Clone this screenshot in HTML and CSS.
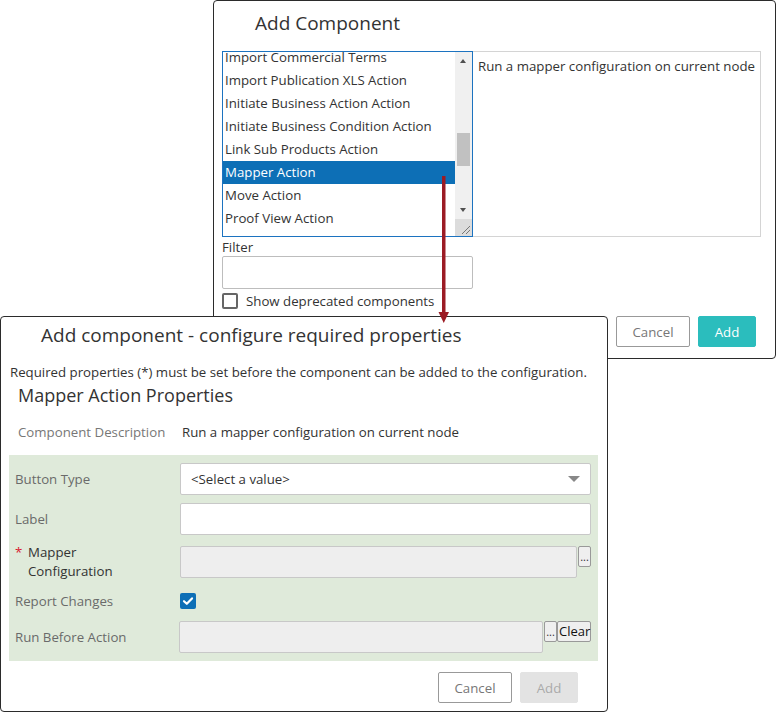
FILE: index.html
```html
<!DOCTYPE html>
<html>
<head>
<meta charset="utf-8">
<link rel="stylesheet" href="styles.css">
</head>
<body>
<div class="desk">
  <section class="dlg dlg-top">
    <h1 class="dlg-title">Add Component</h1>
    <div class="pick">
      <div class="listbox">
        <div class="items">
          <div class="item">Import Commercial Terms</div>
          <div class="item">Import Publication XLS Action</div>
          <div class="item">Initiate Business Action Action</div>
          <div class="item">Initiate Business Condition Action</div>
          <div class="item">Link Sub Products Action</div>
          <div class="item sel">Mapper Action</div>
          <div class="item">Move Action</div>
          <div class="item">Proof View Action</div>
        </div>
        <div class="vscroll">
          <div class="arr up"></div>
          <div class="track"><div class="thumb"></div></div>
          <div class="arr down"></div>
          <div class="grip">
            <svg width="17" height="17" viewBox="0 0 17 17"><path d="M7 15 L15 7 M11 15 L15 11" stroke="#777" stroke-width="1" fill="none"/></svg>
          </div>
        </div>
      </div>
      <div class="desc">Run a mapper configuration on current node</div>
    </div>
    <div class="flabel">Filter</div>
    <div class="finput"></div>
    <div class="chkrow"><span class="chk"></span><span>Show deprecated components</span></div>
    <div class="btns top-btns">
      <button class="btn cancel">Cancel</button>
      <button class="btn add">Add</button>
    </div>
  </section>

  <section class="dlg dlg-bottom">
    <h1 class="dlg-title t2">Add component - configure required properties</h1>
    <p class="note">Required properties (*) must be set before the component can be added to the configuration.</p>
    <h2 class="props">Mapper Action Properties</h2>
    <div class="descrow"><span class="dlbl">Component Description</span><span class="dval">Run a mapper configuration on current node</span></div>
    <div class="panel">
      <div class="row r1">
        <div class="lbl">Button Type</div>
        <div class="ctl"><div class="select"><span>&lt;Select a value&gt;</span><span class="caret"></span></div></div>
      </div>
      <div class="row r2">
        <div class="lbl">Label</div>
        <div class="ctl"><div class="inp"></div></div>
      </div>
      <div class="row r3">
        <div class="lbl req"><span class="star">*</span><span>Mapper<br>Configuration</span></div>
        <div class="ctl"><div class="inp dis"></div><button class="mini">...</button></div>
      </div>
      <div class="row r4">
        <div class="lbl">Report Changes</div>
        <div class="ctl"><span class="cbx"><svg width="16" height="16" viewBox="0 0 16 16"><path d="M4 8.2 L6.8 10.8 L12 5.4" stroke="#fff" stroke-width="2.2" fill="none" stroke-linecap="round" stroke-linejoin="round"/></svg></span></div>
      </div>
      <div class="row r5">
        <div class="lbl">Run Before Action</div>
        <div class="ctl"><div class="inp dis short"></div><button class="mini">...</button><button class="mini clear">Clear</button></div>
      </div>
    </div>
    <div class="btns bot-btns">
      <button class="btn cancel">Cancel</button>
      <button class="btn add off">Add</button>
    </div>
  </section>

  <svg class="arrow" width="14" height="150" viewBox="0 0 14 150">
    <rect x="5" y="0" width="3.5" height="138" fill="#9b1b24"/>
    <path d="M1.5 136 L12 136 L6.75 147 Z" fill="#9b1b24"/>
  </svg>
</div>
</body>
</html>
```
FILE: styles.css
```css
* { box-sizing: border-box; }
html, body { margin: 0; padding: 0; background: #fff; }
body {
  font-family: "Open Sans", "Noto Sans", sans-serif;
  font-size: 13.25px;
  color: #333;
}
.desk { position: relative; width: 777px; height: 712px; overflow: hidden; }

.dlg {
  position: absolute;
  background: #fff;
  border: 1px solid #2b2b2b;
  border-radius: 4px;
}
.dlg-top { left: 213px; top: 0; width: 563px; height: 359px; padding: 0 0 0 8px; }
.dlg-bottom { left: 0; top: 316px; width: 608px; height: 396px; }

.dlg-title {
  margin: 0;
  font-weight: 400;
  font-size: 19px;
  line-height: 26px;
  color: #333;
  padding: 9px 0 0 33px;
  height: 50px;
}
.pick { display: flex; height: 186px; }
.listbox {
  width: 251px;
  border: 1px solid #1c73c0;
  display: flex;
  overflow: hidden;
  position: relative;
}
.items { flex: 1; margin-top: -6px; }
.item { height: 23px; line-height: 23px; padding-left: 2px; white-space: nowrap; }
.item.sel { background: #0d6fb6; color: #fff; }
.vscroll { width: 17px; background: #f0f0f0; display: flex; flex-direction: column; }
.arr { height: 17px; position: relative; }
.arr::after { content: ""; position: absolute; left: 5px; border-left: 3.5px solid transparent; border-right: 3.5px solid transparent; }
.arr.up::after { top: 7px; border-bottom: 4px solid #505050; }
.arr.down::after { top: 6px; border-top: 4px solid #505050; }
.track { flex: 1; position: relative; }
.thumb { position: absolute; left: 2px; right: 2px; top: 64px; height: 33px; background: #c1c1c1; }
.grip { height: 17px; background: #dcdcdc; }
.grip svg { display: block; }
.desc {
  width: 288px;
  border: 1px solid #d4d4d4;
  border-left: none;
  padding: 5px 0 0 5px;
  white-space: nowrap;
}
.flabel { margin-top: 2px; height: 17px; line-height: 17px; }
.finput { width: 251px; height: 33px; border: 1px solid #bdbdbd; border-radius: 2px; margin-top: 0; }
.chkrow { display: flex; align-items: center; gap: 8px; margin-top: 3px; height: 18px; }
.chk { width: 16px; height: 16px; border: 2px solid #666; border-radius: 2px; display: inline-block; }

.btns { display: flex; justify-content: flex-end; gap: 8px; }
.top-btns { position: absolute; right: 19px; top: 315px; }
.btn {
  font-family: inherit;
  font-size: 13.25px;
  height: 31px;
  border-radius: 2px;
  cursor: default;
}
.btn.cancel { width: 74px; background: #fff; border: 1px solid #999; color: #777; }
.btn.add { width: 58px; background: #2bbdbd; border: 1px solid #2bbdbd; color: #fff; }
.btn.add.off { background: #e3e3e3; border-color: #e3e3e3; color: #aaa; }

.t2 { padding: 5px 0 0 40px; height: 36px; }
.note { margin: 10px 0 0 9px; line-height: 18px; white-space: nowrap; }
.props { margin: 2px 0 0 17px; font-weight: 400; font-size: 18px; line-height: 24px; color: #333; }
.descrow { display: flex; margin: 16px 0 0 17px; line-height: 18px; }
.dlbl { width: 164px; color: #777; }
.dval { color: #333; }

.panel {
  margin: 14px 0 0 8px;
  width: 589px;
  height: 206px;
  background: #dfeada;
  padding: 8px 7px 0 6px;
}
.row { display: flex; align-items: center; }
.lbl { width: 165px; color: #6a6a6a; }
.ctl { flex: 1; display: flex; align-items: flex-start; }
.r1, .r2, .r3, .r5 { height: 32px; }
.r2 { margin-top: 8px; }
.r3 { margin-top: 11px; }
.r4 { margin-top: 15px; height: 16px; }
.r5 { margin-top: 12px; }
.select, .inp {
  height: 32px;
  border: 1px solid #c8c8c8;
  border-radius: 2px;
  background: #fff;
}
.select { flex: 1; display: flex; align-items: center; justify-content: space-between; padding: 0 10px; color: #333; }
.caret { width: 0; height: 0; border-left: 6px solid transparent; border-right: 6px solid transparent; border-top: 6px solid #888; }
.inp { flex: 1; }
.inp.dis { background: #eeeeee; }
.inp.short { flex: 0 0 364px; }
.req { display: flex; color: #333; line-height: 19px; }
.star { color: #d9192f; width: 13px; }
.mini {
  font-family: inherit;
  height: 21px;
  min-width: 13px;
  padding: 0 1px;
  background: #efefef;
  border: 1px solid #999;
  border-radius: 2px;
  font-size: 11px;
  line-height: 1;
  color: #333;
  margin-left: 1px;
}
.mini.clear { font-size: 13px; color: #111; margin-left: 0; width: 34px; }
.cbx { width: 16px; height: 16px; border-radius: 2px; background: #0d6fb6; display: inline-block; }
.cbx svg { display: block; }
.bot-btns { position: absolute; right: 29px; bottom: 8px; }

.arrow { position: absolute; left: 437px; top: 176px; z-index: 5; }
```
